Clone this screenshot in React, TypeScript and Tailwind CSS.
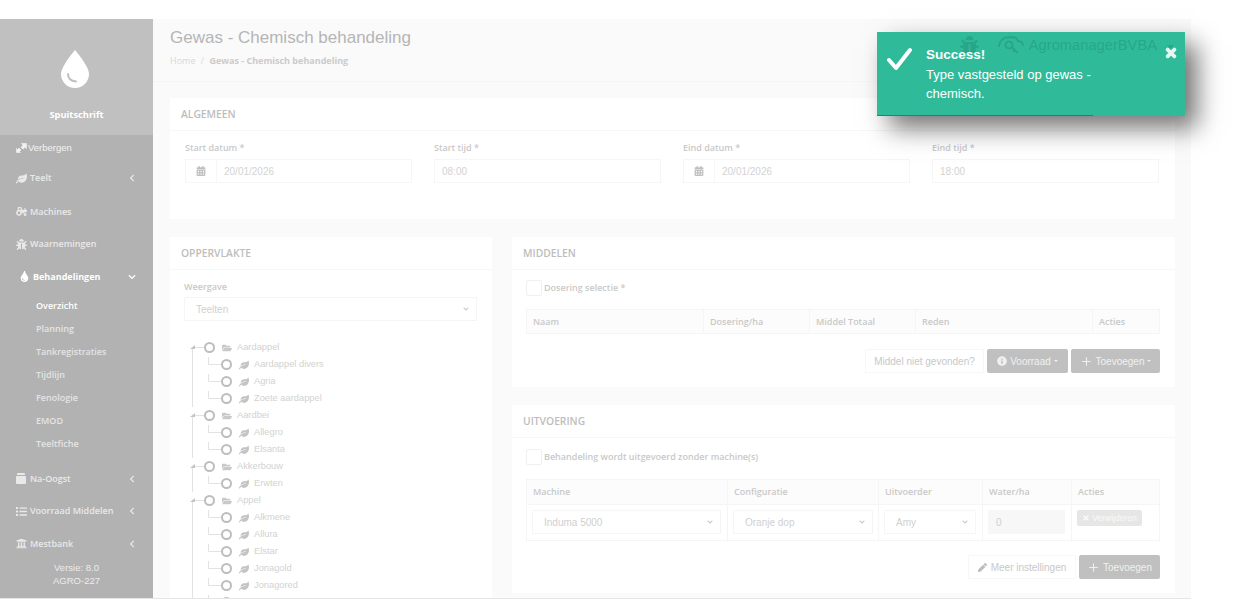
import React from 'react';
import { FaTint, FaLeaf, FaBug, FaCalendarAlt, FaFolderOpen, FaChevronLeft, FaChevronDown, FaList, FaUniversity, FaTimes, FaPen, FaInfoCircle, FaTractor, FaCaretDown } from 'react-icons/fa';
import { Plus } from 'lucide-react';

const MenuItem = ({ icon, label, chevron, h = 'h-[33px]' }: { icon: React.ReactNode; label: string; chevron?: boolean; h?: string }) => (
  <div className={`${h} flex items-center pl-[16px] pr-[17px] text-[#e9e9e9] text-[9px] font-semibold`}>
    <span className="w-[14px] flex justify-start text-[11px]">{icon}</span>
    <span className="flex-1">{label}</span>
    {chevron && <FaChevronLeft className="text-[8px]" />}
  </div>
);

const SubItem = ({ label, active }: { label: string; active?: boolean }) => (
  <div className={`h-[23px] flex items-center pl-[36px] text-[9px] font-semibold ${active ? 'text-white font-bold' : 'text-[#e4e4e4]'}`}>{label}</div>
);

const Sidebar = () => (
  <aside className="w-[153px] shrink-0 bg-[#b2b2b2] flex flex-col font-['Open_Sans',sans-serif]">
    <div className="h-[116px] bg-[#c0c0c0] flex flex-col items-center pt-[31px]">
      <svg width="28" height="38" viewBox="0 0 28 38" className="-ml-[3px]">
        <path d="M14 0C14 0 0 16 0 24a14 14 0 0 0 28 0C28 16 14 0 14 0Z" fill="#fff" />
        <path d="M7 24c0 4 3 7 8 7.500" fill="none" stroke="#c0c0c0" strokeWidth="2" strokeLinecap="round" />
      </svg>
      <div className="mt-[20px] text-white text-[9.300px] font-bold">Spuitschrift</div>
    </div>
    <div className="h-[26px] flex items-center pl-[16px] text-[#f2f2f2]">
      <svg width="11" height="10" viewBox="0 0 11 10" className="mr-[1px]" fill="currentColor" stroke="currentColor" strokeWidth="0.6">
        <path d="M5.500 0.500h5v5l-1.500-1.300-2 2-2-2 2-2Z" />
        <path d="M0.500 9.500v-4l1 1 1.500-1.500 2 2-1.500 1.500 1 1Z" />
      </svg>
      <span className="font-['Liberation_Sans',sans-serif] text-[9.500px]">Verbergen</span>
    </div>
    <MenuItem icon={<FaLeaf />} label="Teelt" chevron h="h-[34px]" />
    <MenuItem icon={<FaTractor />} label="Machines" h="h-[33px]" />
    <MenuItem icon={<FaBug />} label="Waarnemingen" h="h-[32px]" />
    <div className="h-[33px] flex items-center pl-[19px] pr-[17px] text-white text-[9px] font-bold">
      <span className="w-[14px] text-[11px]"><FaTint /></span>
      <span className="flex-1">Behandelingen</span>
      <FaChevronDown className="text-[8px]" />
    </div>
    <div className="pt-[1px] pb-[7px]">
      <SubItem label="Overzicht" active />
      <SubItem label="Planning" />
      <SubItem label="Tankregistraties" />
      <SubItem label="Tijdlijn" />
      <SubItem label="Fenologie" />
      <SubItem label="EMOD" />
      <SubItem label="Teeltfiche" />
    </div>
    <MenuItem
      icon={
        <svg width="10" height="11" viewBox="0 0 10 11" fill="currentColor">
          <path d="M2 0h6a1 1 0 0 1 1 1v1H1V1a1 1 0 0 1 1-1Z" />
          <path d="M1 3h8a1 1 0 0 1 1 1v6a1 1 0 0 1-1 1H1a1 1 0 0 1-1-1V4a1 1 0 0 1 1-1Z" />
        </svg>
      }
      label="Na-Oogst"
      chevron
      h="h-[33px]"
    />
    <MenuItem icon={<FaList />} label="Voorraad Middelen" chevron h="h-[32px]" />
    <MenuItem icon={<FaUniversity />} label="Mestbank" chevron h="h-[33px]" />
    <div className="text-center text-[#ececec] text-[9.500px] leading-[13px] font-['Liberation_Sans',sans-serif] pt-[1px]">
      <div>Versie: 8.0</div>
      <div>AGRO-227</div>
    </div>
  </aside>
);

const Panel = ({ title, className = '', children }: { title: string; className?: string; children: React.ReactNode }) => (
  <section className={`bg-white ${className}`}>
    <div className="h-[33px] flex items-center pl-[11px] pt-[1px] border-b border-[#f7f7f7] text-[#bdbdbd] text-[10.300px] font-semibold font-['Open_Sans',sans-serif]">{title}</div>
    {children}
  </section>
);

const Label = ({ children }: { children: React.ReactNode }) => (
  <div className="text-[#c9c9c9] text-[9px] font-semibold font-['Open_Sans',sans-serif] leading-[13px] mb-[4px]">{children}</div>
);

const DateField = ({ label, value, icon }: { label: string; value: string; icon?: boolean }) => (
  <div className="w-[227px]">
    <Label>{label}</Label>
    <div className="mt-[5px] h-[24px] border border-[#f6f6f6] flex items-center text-[#d3d3d3] text-[10px] font-['Liberation_Sans',sans-serif]">
      {icon && (
        <span className="w-[31px] h-full border-r border-[#f6f6f6] flex items-center justify-center text-[#bfbfbf] text-[10px]">
          <FaCalendarAlt />
        </span>
      )}
      <span className="pl-[7px]">{value}</span>
    </div>
  </div>
);

type Node = { label: string; children: string[] };
const tree: Node[] = [
  { label: 'Aardappel', children: ['Aardappel divers', 'Agria', 'Zoete aardappel'] },
  { label: 'Aardbei', children: ['Allegro', 'Elsanta'] },
  { label: 'Akkerbouw', children: ['Erwten'] },
  { label: 'Appel', children: ['Alkmene', 'Allura', 'Elstar', 'Jonagold', 'Jonagored', ''] },
];

const Connector = ({ root }: { root?: boolean }) => (
  <svg width={root ? 17 : 34} height="17" viewBox={root ? '0 0 17 17' : '0 0 34 17'} className="shrink-0 text-[#e2e2e2]">
    {root ? (
      <>
        <path d="M5.500 10v7" stroke="currentColor" fill="none" />
        <path d="M3 10h5V6Z" fill="#c4c4c4" />
        <path d="M8 8.500h9" stroke="currentColor" fill="none" />
      </>
    ) : (
      <>
        <path d="M5.500 0v17" stroke="currentColor" fill="none" />
        <path d="M21.500 1v7.500h12.500" stroke="currentColor" fill="none" />
      </>
    )}
  </svg>
);

const Radio = () => <span className="w-[11px] h-[11px] shrink-0 rounded-full border-2 border-[#bdbdbd]" />;

const Tree = () => (
  <div className="pl-[17px] font-['Liberation_Sans',sans-serif] text-[#d2d2d2] text-[9.300px]">
    {tree.map(n => (
      <div key={n.label}>
        <div className="h-[17px] flex items-center">
          <Connector root />
          <Radio />
          <FaFolderOpen className="ml-[7px] mr-[5px] text-[#c9c9c9] text-[10px]" />
          <span>{n.label}</span>
        </div>
        {n.children.map(c => (
          <div key={c} className="h-[17px] flex items-center">
            <Connector />
            <Radio />
            <FaLeaf className="ml-[7px] mr-[5px] text-[#c4c4c4] text-[10px]" />
            {c && <span>{c}</span>}
          </div>
        ))}
      </div>
    ))}
  </div>
);

const Select = ({ value, w }: { value: string; w: string }) => (
  <div className={`${w} h-[24px] border border-[#f5f5f5] flex items-center justify-between pl-[11px] pr-[7px] text-[#d0d0d0] text-[10px] font-normal font-['Liberation_Sans',sans-serif]`}>
    <span>{value}</span>
    <FaChevronDown className="text-[6px] text-[#c4c4c4]" />
  </div>
);

const Th = ({ w, children }: { w: string; children?: React.ReactNode }) => (
  <div className={`${w} shrink-0 border-r border-[#f5f5f5] last:border-r-0 pl-[6px] flex items-center`}>{children}</div>
);

const GreyButton = ({ icon, label, caret, w }: { icon: React.ReactNode; label: string; caret?: boolean; w: string }) => (
  <div className={`${w} h-[24px] rounded-[2px] bg-[#c0c0c0] text-[#f0f0f0] text-[10px] font-['Liberation_Sans',sans-serif] flex items-center justify-center gap-[3px]`}>
    {icon}
    <span>{label}</span>
    {caret && <span className="w-0 h-0 border-x-[2px] border-x-transparent border-t-[2px] border-t-[#f0f0f0]" />}
  </div>
);

const Checkbox = () => <span className="w-[16px] h-[16px] border border-[#f0f0f0] rounded-[2px]" />;

export default function App() {
  return (
    <div className="relative w-[1250px] h-[599px] overflow-hidden bg-white">
      <div className="w-[1191px] h-[598px] mt-[19px] flex bg-[#fafafa] overflow-hidden">
        <Sidebar />
        <main className="flex-1 min-w-0">
          <header className="h-[63px] pl-[17px] pr-[15px] pt-[7px] border-b border-[#f6f6f6] flex justify-between">
            <div>
              <h1 className="text-[17px] leading-[24px] text-[#b5b5b5] font-['Liberation_Sans',sans-serif]">Gewas - Chemisch behandeling</h1>
              <div className="mt-[4px] text-[9px] font-['Open_Sans',sans-serif] text-[#d8d8d8]">
                Home <span className="mx-[3px]">/</span> <span className="font-bold text-[#cbcbcb]">Gewas - Chemisch behandeling</span>
              </div>
            </div>
            <div className="flex items-center gap-[6px] h-[36px] mt-[1px] text-[#b4283c] font-['Liberation_Sans',sans-serif] text-[14.700px]">
              <FaBug className="text-[19px] mr-[12px]" />
              <svg width="27" height="20" viewBox="0 0 27 20" fill="none" stroke="currentColor" strokeWidth="2" className="-mr-[1px]">
                <path d="M2 12C2 5 8 1.500 13 2.500c4-1 7 .5 8 3.500 3 0 5 2 5 5" />
                <circle cx="12" cy="10" r="3.500" />
                <path d="M15 12.500l6 5.500M18 15l-2 2" />
              </svg>
              <span>AgromanagerBVBA</span>
              <FaCaretDown className="text-[11px] ml-[2px] mt-[3px]" />
            </div>
          </header>
          <div className="pl-[17px] pr-[16px] pt-[16px] flex flex-col gap-[18px]">
            <Panel title="ALGEMEEN" className="h-[121px]">
              <div className="flex gap-[22px] pl-[15px] pt-[10px]">
                <DateField label="Start datum *" value="20/01/2026" icon />
                <DateField label="Start tijd *" value="08:00" />
                <DateField label="Eind datum *" value="20/01/2026" icon />
                <DateField label="Eind tijd *" value="18:00" />
              </div>
            </Panel>
            <div className="flex gap-[20px] items-start">
              <Panel title="OPPERVLAKTE" className="w-[322px] h-[400px]">
                <div className="px-[14px] pt-[10px]">
                  <Label>Weergave</Label>
                  <Select value="Teelten" w="w-[293px]" />
                </div>
                <div className="pt-[18px]">
                  <Tree />
                </div>
              </Panel>
              <div className="flex-1 flex flex-col gap-[18px]">
                <Panel title="MIDDELEN" className="h-[150px]">
                  <div className="pl-[14px] pr-[15px] pt-[10px]">
                    <div className="flex items-center gap-[2px]">
                      <Checkbox />
                      <span className="text-[#c9c9c9] text-[9px] font-semibold font-['Open_Sans',sans-serif]">Dosering selectie *</span>
                    </div>
                    <div className="mt-[13px] h-[25px] flex border border-[#f5f5f5] bg-[#fcfcfc] text-[#c9c9c9] text-[9px] font-semibold font-['Open_Sans',sans-serif]">
                      <Th w="w-[177px]">Naam</Th>
                      <Th w="w-[106px]">Dosering/ha</Th>
                      <Th w="w-[106px]">Middel Totaal</Th>
                      <Th w="w-[177px]">Reden</Th>
                      <Th w="flex-1">Acties</Th>
                    </div>
                    <div className="mt-[15px] flex justify-end gap-[3px]">
                      <div className="w-[119px] h-[24px] border border-[#f7f7f7] flex items-center justify-center text-[#c8c8c8] text-[10px] font-['Liberation_Sans',sans-serif]">Middel niet gevonden?</div>
                      <GreyButton icon={<FaInfoCircle className="text-[10px]" />} label="Voorraad" caret w="w-[81px]" />
                      <GreyButton icon={<Plus size={13} strokeWidth={2} />} label="Toevoegen" caret w="w-[89px]" />
                    </div>
                  </div>
                </Panel>
                <Panel title="UITVOERING" className="h-[188px]">
                  <div className="pl-[14px] pr-[15px] pt-[11px]">
                    <div className="flex items-center gap-[2px]">
                      <Checkbox />
                      <span className="text-[#c9c9c9] text-[9px] font-semibold font-['Open_Sans',sans-serif]">Behandeling wordt uitgevoerd zonder machine(s)</span>
                    </div>
                    <div className="mt-[14px] border border-[#f5f5f5] text-[#c9c9c9] text-[9px] font-semibold font-['Open_Sans',sans-serif]">
                      <div className="h-[25px] flex bg-[#fcfcfc] border-b border-[#f5f5f5]">
                        <Th w="w-[201px]">Machine</Th>
                        <Th w="w-[151px]">Configuratie</Th>
                        <Th w="w-[104px]">Uitvoerder</Th>
                        <Th w="w-[89px]">Water/ha</Th>
                        <Th w="flex-1">Acties</Th>
                      </div>
                      <div className="h-[35px] flex">
                        <div className="w-[201px] shrink-0 border-r border-[#f5f5f5] pl-[5px] pt-[5px]"><Select value="Induma 5000" w="w-[189px]" /></div>
                        <div className="w-[151px] shrink-0 border-r border-[#f5f5f5] pl-[5px] pt-[5px]"><Select value="Oranje dop" w="w-[140px]" /></div>
                        <div className="w-[104px] shrink-0 border-r border-[#f5f5f5] pl-[5px] pt-[5px]"><Select value="Amy" w="w-[92px]" /></div>
                        <div className="w-[89px] shrink-0 border-r border-[#f5f5f5] pl-[5px] pt-[5px]">
                          <div className="w-[77px] h-[24px] bg-[#f7f7f7] flex items-center pl-[8px] text-[#d0d0d0] text-[10px] font-normal font-['Liberation_Sans',sans-serif]">0</div>
                        </div>
                        <div className="pl-[5px] pt-[5px]">
                          <div className="w-[65px] h-[16px] rounded-[2px] bg-[#e6e6e6] text-[#fafafa] text-[8.500px] font-normal flex items-center justify-center gap-[2px] font-['Liberation_Sans',sans-serif]">
                            <FaTimes className="text-[8px]" />Verwijderen
                          </div>
                        </div>
                      </div>
                    </div>
                    <div className="mt-[14px] flex justify-end gap-[3px]">
                      <div className="w-[108px] h-[24px] border border-[#f7f7f7] flex items-center justify-center gap-[4px] text-[#c8c8c8] text-[10px] font-['Liberation_Sans',sans-serif]">
                        <FaPen className="text-[9px] text-[#bdbdbd]" />Meer instellingen
                      </div>
                      <GreyButton icon={<Plus size={13} strokeWidth={2} />} label="Toevoegen" w="w-[81px]" />
                    </div>
                  </div>
                </Panel>
              </div>
            </div>
          </div>
        </main>
      </div>
      <div className="absolute left-0 right-[59px] top-[598px] h-px bg-[#e6e6e6]" />

      <div className="absolute left-[877px] top-[32px] w-[308px] h-[84px] bg-[#18b48f]/90 shadow-[12px_12px_24px_rgba(0,0,0,0.55)] font-['Liberation_Sans',sans-serif] text-white">
        <svg width="26" height="24" viewBox="0 0 26 24" fill="none" stroke="#fff" strokeWidth="4" strokeLinecap="round" strokeLinejoin="round" className="absolute left-[10px] top-[15px]">
          <path d="M2 13l7 8L23 3" />
        </svg>
        <FaTimes className="absolute right-[7px] top-[14px] text-[14px] text-[#e6f7f2] stroke-current stroke-[40]" />
        <div className="pl-[49px] pr-[36px] pt-[13px] text-[13px] leading-[19.500px]">
          <div className="font-bold text-[13.500px]">Success!</div>
          <div>Type vastgesteld op gewas - chemisch.</div>
        </div>
        <div className="absolute left-0 bottom-0 h-px w-[216px] bg-[#23856e]" />
      </div>
    </div>
  );
}
